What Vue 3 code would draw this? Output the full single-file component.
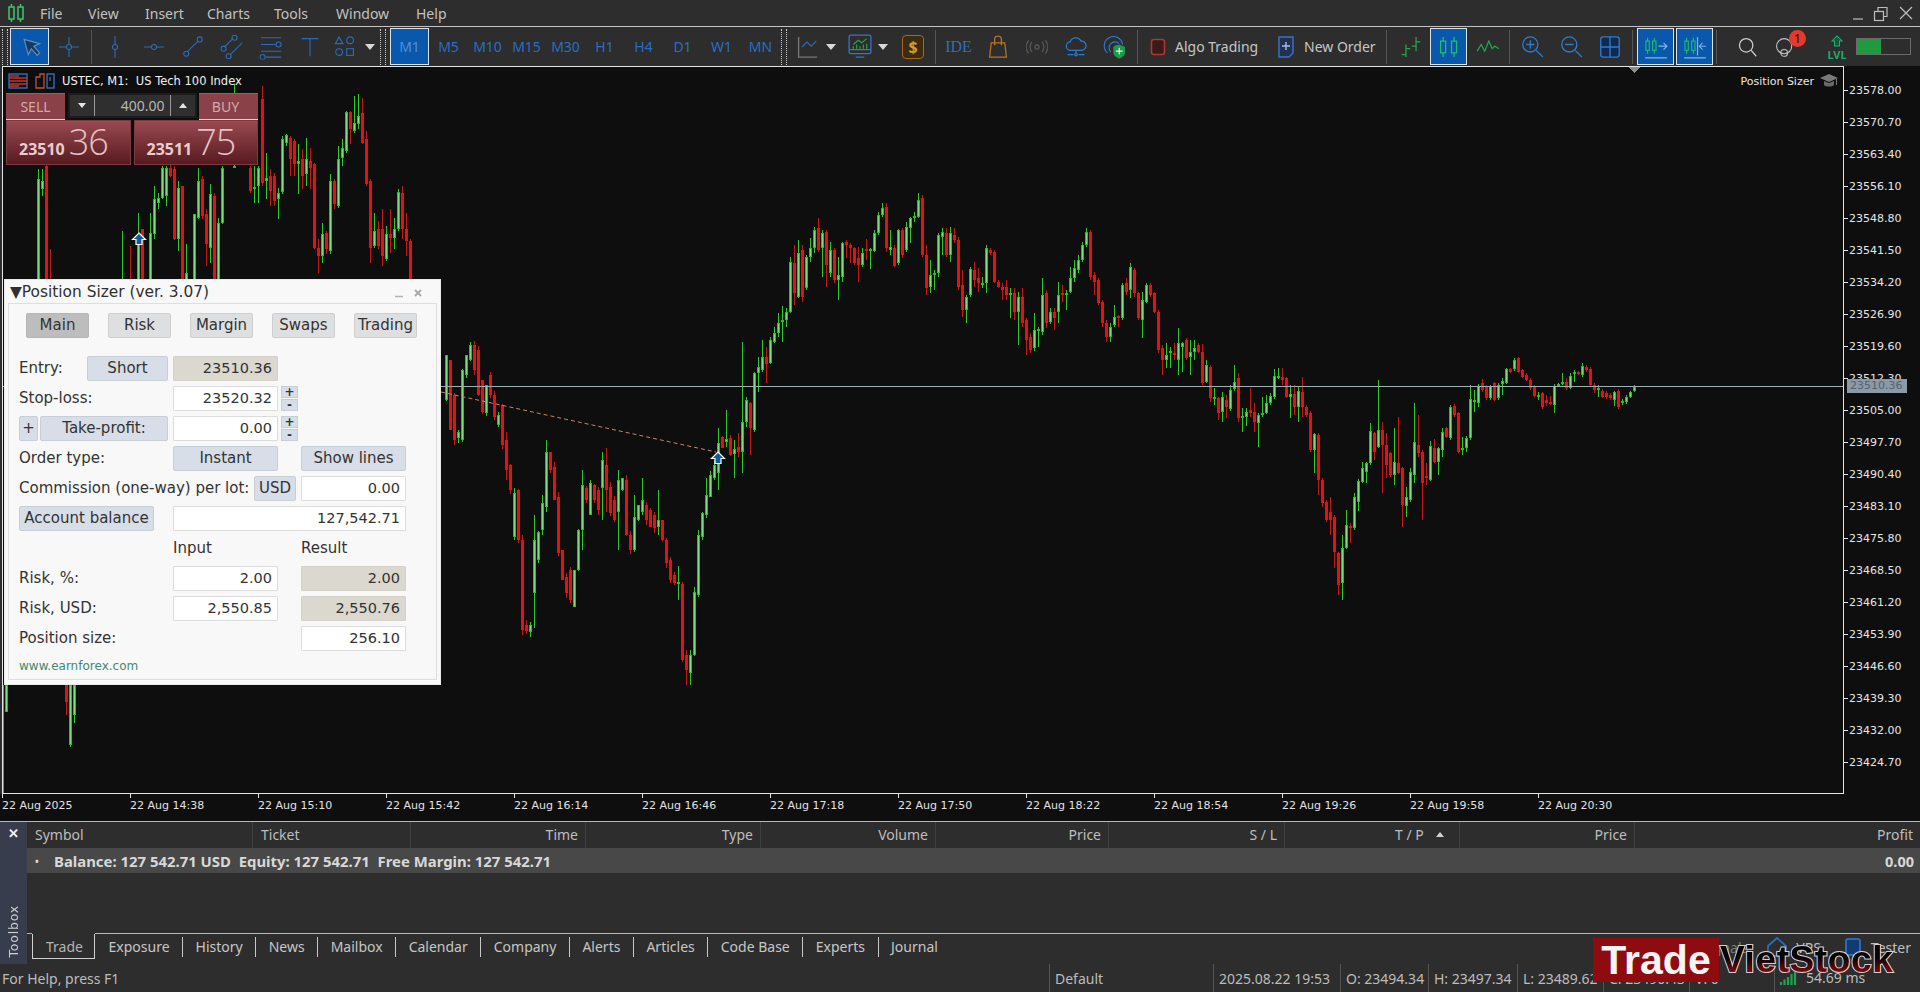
<script setup>
const menus = ['File', 'View', 'Insert', 'Charts', 'Tools', 'Window', 'Help']
const periods = ['M5', 'M10', 'M15', 'M30', 'H1', 'H4', 'D1', 'W1', 'MN']
const prices = ['23578.00','23570.70','23563.40','23556.10','23548.80','23541.50','23534.20','23526.90','23519.60','23512.30','23505.00','23497.70','23490.40','23483.10','23475.80','23468.50','23461.20','23453.90','23446.60','23439.30','23432.00','23424.70']
const times = ['22 Aug 2025','22 Aug 14:38','22 Aug 15:10','22 Aug 15:42','22 Aug 16:14','22 Aug 16:46','22 Aug 17:18','22 Aug 17:50','22 Aug 18:22','22 Aug 18:54','22 Aug 19:26','22 Aug 19:58','22 Aug 20:30']
const cols = [['Symbol', 'l'], ['Ticket', 'l'], ['Time', 'r'], ['Type', 'r'], ['Volume', 'r'], ['Price', 'r'], ['S / L', 'r'], ['T / P', 's'], ['Price', 'r'], ['Profit', 'r']]
const tabs = ['Exposure', 'History', 'News', 'Mailbox', 'Calendar', 'Company', 'Alerts', 'Articles', 'Code Base', 'Experts', 'Journal']
const status = [['Default', 164], ['2025.08.22 19:53', 127], ['O: 23494.34', 88], ['H: 23497.34', 89], ['L: 23489.62', 86], ['C: 23490.43', 86], ['V: 0', 85]]

let seed = 20250822
function rnd() {
  seed = (seed * 1664525 + 1013904223) % 4294967296
  return seed / 4294967296
}
const bars = []
function seg(x0, base, scale, text) {
  text.trim().split(/\s+/).forEach((tok, i) => {
    const m = tok.match(/^([gr])(\d+)-(\d+)(?::(\d+)-(\d+))?$/)
    if (!m) return
    const top = base + m[2] * scale
    const bot = base + m[3] * scale
    const wt = m[4] ? base + m[4] * scale : top - Math.floor(rnd() * 6)
    const wb = m[5] ? base + m[5] * scale : bot + Math.floor(rnd() * 6)
    bars.push({ x: x0 + i * 4, c: m[1], top, bot, wt, wb })
  })
}
seg(2, 685, 1, 'g0-108:0-108 g0-27:0-27')
seg(38, 66, 1 / 3, 'g340-700:310-700 g345-370:310-390 r300-700 r640-700:550-700')
seg(66, 685, 1, 'r0-17:0-30 g0-60:0-62 g0-30:0-38')
seg(122, 66, 1 / 3, 'g640-700:495-700 _ r640-700:540-700 _ g520-700:440-700 r490-700 _ g500-700:440-700 g400-505:360-520 g395-410:380-430 g305-395:300-400 g305-390:300-420 r305-330 r310-520 g365-520:345-555 r360-700 g620-700:535-700 _ g445-700 g345-455:305-460 r340-450:330-460 r445-535:430-600 g385-545:355-590 r390-700 g470-700 g305-470:300-475')
seg(234, 66, 1 / 3, 'g300-306:55-306')
seg(250, 66, 1 / 3, 'r305-375:300-380 g362-368:300-410 g305-360:300-410 r100-350:60-360 g335-345:260-400 r330-375:310-420 r330-405:320-420 g380-400:365-460 g220-378:210-385 g208-232:205-240 r215-280:210-330 r225-295:220-330 g285-295:235-385 r280-330:250-370 g280-325:215-360 r285-305:245-370 r295-545:290-550 r545-570:520-620 g505-570:470-590 r500-550:495-565 g345-555:325-565 r345-415:340-430 g280-420:240-425 g245-275:220-300 g138-255:135-260 r138-190:135-235 g170-195:90-200 g150-175:85-190 r140-230:95-235 r220-355:195-360 r345-545:340-590 g495-540:440-545 r490-540:465-550 r490-570:430-600 g505-580:480-585 r505-515:430-560 g490-515:455-550 g378-490:370-495 r380-490:360-520 r490-525:440-570 r525-700')
seg(446, 0, 1, 'g355-400 r360-430 r395-440 g432-438 g370-440 g355-375 g345-360 r345-370 r350-395 r380-412 g385-413 r375-395 r395-417 g415-425 r405-445 r440-470:432-480 r465-490 g493-537:488-540 r490-540 r540-630 r625-631:620-634 g625-632 g540-593:515-628 g532-560 g503-530:495-535 g452-507:440-512 r452-470 r467-500 r497-553 r550-580 r577-593 r570-600 g570-607 g530-570 g485-530:470-550 r488-500 g483-515 r485-500 r490-510 g460-488:452-520 r465-490:448-512 r487-513 r500-520 g480-512:470-550 g478-490 r480-535 r535-550 g517-550:495-552 g505-520 g500-512:478-515 r505-520 r510-527 r515-528 g520-527:490-535 r520-540 r540-563 r560-580 r575-583 g582-584:566-600 r584-660 r655-670:650-685 g655-673:650-685 g592-655 g535-595 g513-537 g495-515:478-518 g475-497 g465-478 g443-473:428-490')
seg(718, 180, 1 / 3, 'g790-880 r770-805 g778-785:690-800 r775-825 g808-822:780-895 r800-815:760-830 g725-815:485-880 g660-725:650-740 r670-745:665-825 g580-750:575-755 g562-578:530-635 g532-570:480-575 r530-552:500-610 g480-548:470-552 g460-485:440-490 g428-460:400-470 g420-426:378-485 g395-420:385-440 g245-395:230-400 r250-340:195-375 g220-350:180-355 r210-350:195-365 g230-325:225-330 g205-230:175-245 g150-205:140-220 r145-210:115-215 g160-205:150-290 r155-255:150-320 g210-280:185-290 r210-300:205-310 g285-300:230-360 g188-290:185-305 r185-195:180-235 r195-205:190-250 r205-250:200-255 r235-255:200-305 g220-255:205-260 r208-214:178-240 g208-214:205-268 g160-212:150-215 g105-160:95-165 g85-105:70-110 r80-205:70-215 g200-210:150-225 r205-258:195-260 g150-250:148-255 r150-225:145-235 g140-210:125-215 g115-145:110-190 g108-114:95-125 g60-110:40-115 r55-225:45-230 r225-325:195-345 g285-320:240-340 g280-286:270-330 g165-280:160-290 g155-170:145-225 r160-225:145-230 g160-225:140-245 r165-180:145-190 r180-320:170-330 r315-390:270-410 g350-390:345-430 g268-345:262-350 r270-300:245-320 r295-310:265-335 g308-314:290-325 g205-310:195-340 r210-220:205-225 r215-305:210-310 r305-320:300-325 r320-330:310-360 r320-345:300-360 g340-346:325-415 r340-395:325-420 g350-395:335-495 r350-430:325-440 r420-480:415-525 r470-510:460-520 g450-505:400-512 g448-453:440-500 g345-455:295-465 r340-430:330-445 g395-425:385-432 r395-415:385-450 g345-395:305-430 r338-343:315-365 g338-343:330-390 g295-335:260-340 g265-295:240-305 g240-270:225-280 g195-240:185-245 g155-195:145-200 r155-290:150-300 r285-305:275-345 r300-370:295-375 r365-430:360-440 r430-470:420-485 g440-470:430-485 g410-435:375-440 r408-414:405-440 g315-415:310-420 r310-335:295-345 g260-330:250-355 r270-340:265-350 r340-415:335-420 g360-420:335-475 g315-365:310-370 r315-345:310-350 r340-395:335-400 r395-510:390-520 r505-540:495-585 g525-540:490-565 g513-519:500-565 r518-525:490-540 g490-540:445-585')
seg(1182, 320, 1 / 3, 'g70-80:65-155 r60-115:55-120 g97-110:60-165 g83-95:60-120 r75-95:70-100 r95-190:72-195 g135-185:120-190 r140-235:135-245 g232-238:205-255 r235-280:230-300 g232-275:215-305 r240-260:225-295 g210-268:195-272 g187-208:135-212 r175-295:160-305 g288-294:265-335 g277-290:265-318 r270-280:205-290 r275-305:250-335 g285-308:280-380 g278-284:230-290 g250-278:225-282 g227-250:220-255 g168-232:148-238 g168-174:145-178 r170-180:145-195 r175-230:170-235 g222-232:195-295 r222-260:195-285 g212-260:200-305 r215-262:170-290 r262-285:255-290 r278-390:272-395 g343-390:340-460 r345-480:340-525 r480-550:475-560 r545-600:540-605 r575-600:530-645 r590-695:585-745 r700-795:695-825 g685-790:645-840 g615-683:570-688 r618-624:610-670 g530-625:520-630 g483-545:478-572 g445-485:425-490 g430-455:425-490 g333-430:310-435 r340-395:335-420 g330-380:180-385 r330-375:305-520 r375-435:340-475 r400-465:395-470 g425-465:325-495 r430-458:290-462 r445-555:440-620 g530-558:500-590 g455-540:445-545 g367-465:250-490 r375-400:285-410 r395-490:390-600 r468-474:430-495 g378-480:362-482 r385-425:358-430 g385-425:380-465 g335-390:325-410 r325-350:320-355 g262-355:255-360 r258-285:252-290 r280-395:275-400 g383-389:350-405 g355-385:348-395 g238-355:195-360 g240-246:210-275 g197-248:192-262 r190-210:178-215 r200-235:195-240 g198-235:195-240 r190-240:185-244 g195-235:190-240 g183-192:175-225 g147-188:143-192 r148-155:144-160 g120-148:115-152 r113-155:110-160 r150-170:146-174 r165-180:160-184 r180-205:175-210 r200-228:196-232 g226-232:215-240 r220-260:215-268 r240-250:225-258 r245-252:228-256 g197-255:192-280 g193-199:188-202 g185-190:160-195 r185-205:175-210 g167-205:160-208 g157-163:150-185 r156-162:152-166 g138-165:130-172 r140-150:135-155 r148-195:142-200 r195-210:190-218 g204-208:195-232 r212-230:208-234 r218-232:214-236 r225-235:220-240 g217-240:212-258 r213-262:208-268 g243-249:238-256 g230-245:226-252 g215-230:212-235 g200-213:196-216')

function rectPath(x, y, w, h) {
  if (h <= 0) return ''
  return `M${x} ${y}h${w}v${h}h${-w}z`
}
const paths = { gw: '', rw: '', gb: '', rb: '', gc: '' }
bars.forEach((b) => {
  const t = Math.round(b.top), h = Math.max(2, Math.round(b.bot) - t)
  const wt = Math.round(Math.min(b.wt, b.top)), wb = Math.round(Math.max(b.wb, b.bot))
  if (b.c === 'g') {
    paths.gw += rectPath(b.x, wt, 1, wb - wt)
    paths.gb += rectPath(b.x - 1, t, 3, h)
    paths.gc += rectPath(b.x, t + 1, 1, h - 2)
  } else {
    paths.rw += rectPath(b.x, wt, 1, wb - wt)
    paths.rb += rectPath(b.x - 1, t, 3, h)
  }
})
</script>

<template>
  <div class="app">
    <header class="menubar">
      <svg class="logo" width="20" height="20" viewBox="0 0 20 20"><g fill="none" stroke="#3fbf6a" stroke-width="1.6"><rect x="3" y="4" width="5" height="12"/><rect x="12" y="4" width="5" height="12"/><path d="M5.5 1v3M5.5 16v3M14.500 1v3M14.500 16v3"/></g></svg>
      <nav class="menus"><span v-for="m in menus" :key="m" class="menu">{{ m }}</span></nav>
      <div class="winctl">
        <svg width="72" height="20" viewBox="0 0 72 20"><g fill="none" stroke="#bdbdbd" stroke-width="1.2"><path d="M2 16h10"/><rect x="23.500" y="8.500" width="9" height="9"/><path d="M27 8V4.500h9v9h-3.500"/><path d="M49 4l12 12M61 4L49 16"/></g></svg>
      </div>
    </header>

    <div class="toolbar">
      <i class="grip"></i>
      <span class="tb on w39"><svg width="30" height="30" viewBox="0 0 30 30"><path d="M8 6l5 18 3.500-7 7 8 3-3-7-8 7-3z" fill="#17385f" stroke="#5f8fc6" stroke-width="1.4"/></svg></span>
      <span class="tb w39"><svg width="26" height="26" viewBox="0 0 26 26"><g fill="none" stroke="#2d6bb8" stroke-width="1.3"><path d="M13 1v9M13 16v9M1 13h9M16 13h9"/><circle cx="13" cy="13" r="3"/></g></svg></span>
      <i class="sep"></i>
      <span class="tb w39"><svg width="26" height="30" viewBox="0 0 26 30"><g fill="none" stroke="#2d6bb8" stroke-width="1.3"><path d="M13 2v10M13 18v10"/><circle cx="13" cy="15" r="3"/></g></svg></span>
      <span class="tb w39"><svg width="28" height="26" viewBox="0 0 28 26"><g fill="none" stroke="#2d6bb8" stroke-width="1.3"><path d="M2 13h9M17 13h9"/><circle cx="14" cy="13" r="3"/></g></svg></span>
      <span class="tb w39"><svg width="28" height="30" viewBox="0 0 28 30"><g fill="none" stroke="#2d6bb8" stroke-width="1.3"><path d="M8 20L20 8"/><circle cx="6" cy="23" r="3"/><circle cx="22" cy="6" r="3"/></g></svg></span>
      <span class="tb w39"><svg width="28" height="30" viewBox="0 0 28 30"><g fill="none" stroke="#2d6bb8" stroke-width="1.3"><path d="M5 15L15 5M12 24L26 10"/><circle cx="17" cy="4" r="3"/><circle cx="4" cy="17" r="3"/><circle cx="10" cy="26" r="3"/></g></svg></span>
      <span class="tb w39"><svg width="28" height="30" viewBox="0 0 28 30"><g fill="none" stroke="#2d6bb8" stroke-width="1.3"><path d="M2 4h24M2 12h18M2 20h24M8 27h18"/><circle cx="23" cy="12" r="3"/><circle cx="4" cy="27" r="3"/></g></svg></span>
      <span class="tb w39"><svg width="24" height="26" viewBox="0 0 24 26"><path d="M2 3h20M12 3v21" fill="none" stroke="#2d6bb8" stroke-width="1.3"/></svg></span>
      <span class="tb w32"><svg width="26" height="30" viewBox="0 0 26 30"><g fill="none" stroke="#2d6bb8" stroke-width="1.3"><path d="M6 3l4.500 8h-9z"/><circle cx="19" cy="7" r="4"/><circle cx="6" cy="21" r="4"/><rect x="15" y="17" width="8" height="8"/></g></svg></span>
      <span class="tb w18"><i class="caret"></i></span>
      <i class="grip g2"></i>
      <span class="tb on w39 per">M1</span>
      <span v-for="p in periods" :key="p" class="tb w39 per">{{ p }}</span>
      <i class="grip g3"></i>
      <span class="tb w30"><svg width="30" height="32" viewBox="0 0 30 32"><path d="M5 4v24h22" fill="none" stroke="#777" stroke-width="1.6"/><path d="M9 16l6-6 5 5 6-6" fill="none" stroke="#2d6bb8" stroke-width="1.4"/></svg></span>
      <span class="tb w18"><i class="caret"></i></span>
      <span class="tb w34 ml3"><svg width="30" height="32" viewBox="0 0 30 32"><rect x="2" y="2" width="26" height="22" rx="2" fill="none" stroke="#3a73c8" stroke-width="1.5"/><path d="M2 19h26M10 28h10" stroke="#3a73c8" stroke-width="1.5"/><path d="M7 13l6-5 4 3 6-5" fill="none" stroke="#2aa34a" stroke-width="1.3"/><path d="M7 18v-3M11 18v-5M15 18v-3M19 18v-5M23 18v-6" stroke="#2aa34a" stroke-width="1.4"/></svg></span>
      <span class="tb w18 mlm"><i class="caret"></i></span>
      <span class="tb w38 ml2"><span class="dollar">$</span></span>
      <i class="sep"></i>
      <span class="tb w39 ide">IDE</span>
      <span class="tb w39"><svg width="22" height="28" viewBox="0 0 22 28"><g fill="none" stroke="#b5771f" stroke-width="1.5"><path d="M3 9h16l2 17H1z"/><path d="M7 12V5a4 4 0 018 0v7"/></g></svg></span>
      <span class="tb w39"><svg width="26" height="20" viewBox="0 0 26 20"><g fill="none" stroke="#5a5a5a" stroke-width="1.4"><circle cx="13" cy="10" r="2.500"/><path d="M7 4a9 9 0 000 12M19 4a9 9 0 010 12M3 2a13 13 0 000 16M23 2a13 13 0 010 16"/></g></svg></span>
      <span class="tb w39"><svg width="26" height="26" viewBox="0 0 26 26"><g fill="none" stroke="#2d7bd0" stroke-width="1.4"><path d="M7 17a5 5 0 01-1-10 7 7 0 0113-1 5.500 5.500 0 011 11z"/><path d="M13 17v4M3 22h7M16 22h7"/><circle cx="13" cy="22" r="1.500"/></g></svg></span>
      <span class="tb w39"><svg width="28" height="30" viewBox="0 0 28 30"><g fill="none" stroke="#2d7bd0" stroke-width="1.4"><path d="M5 22a11 11 0 1118-10M9 21a7 7 0 1110-10M13 16a3 3 0 015-2"/></g><path d="M19 12l7 3v6c0 4-3 6-7 8-4-2-7-4-7-8v-6z" fill="#1c9c4a"/><path d="M19 16v8M15 20h8" stroke="#d7f5e2" stroke-width="1.4"/></svg></span>
      <i class="sep s2"></i>
      <span class="tlabel algo"><svg width="16" height="20" viewBox="0 0 16 20"><rect x="1.500" y="2.500" width="13" height="15" rx="2.500" fill="#3a1a1a" stroke="#b0362e" stroke-width="1.6"/></svg><b>Algo Trading</b></span>
      <span class="tlabel order"><svg width="18" height="24" viewBox="0 0 18 24"><path d="M2 2h14v16l-4 4H2z" fill="#22324e" stroke="#3a73c8" stroke-width="1.4"/><path d="M9 7v8M5 11h8" stroke="#9fc0ee" stroke-width="1.4"/></svg><b>New Order</b></span>
      <i class="sep s3"></i>
      <span class="tb w39"><svg width="28" height="30" viewBox="0 0 28 30"><path d="M8 12v15M3 24h5M8 17h5M20 3v17M15 14h5M20 9h5" fill="none" stroke="#2aa34a" stroke-width="1.5"/></svg></span>
      <span class="tb on w37"><svg width="26" height="30" viewBox="0 0 26 30"><g fill="none" stroke="#1fc06a" stroke-width="1.5"><rect x="3" y="8" width="6" height="14"/><rect x="16" y="8" width="6" height="14"/><path d="M6 3v5M6 22v5M19 3v5M19 22v5"/></g></svg></span>
      <span class="tb w39 ml1"><svg width="28" height="20" viewBox="0 0 28 20"><path d="M1 15l5-8 4 8 5-12 4 9 3-3 5 3" fill="none" stroke="#2aa34a" stroke-width="1.5"/></svg></span>
      <i class="sep s5"></i>
      <span class="tb w39"><svg width="28" height="30" viewBox="0 0 28 30"><g fill="none" stroke="#2d7bd0" stroke-width="1.6"><circle cx="12" cy="12" r="9"/><path d="M12 7v10M7 12h10M19 19l8 8"/></g></svg></span>
      <span class="tb w39"><svg width="28" height="30" viewBox="0 0 28 30"><g fill="none" stroke="#2d7bd0" stroke-width="1.6"><circle cx="12" cy="12" r="9"/><path d="M7 12h10M19 19l8 8"/></g></svg></span>
      <span class="tb w39"><svg width="26" height="28" viewBox="0 0 26 28"><g fill="#10294d" stroke="#2d7bd0" stroke-width="1.6"><rect x="2" y="2" width="22" height="24" rx="3"/><path d="M13 2v24M2 14h22"/></g></svg></span>
      <i class="sep"></i>
      <span class="tb on w37 ml1"><svg width="30" height="30" viewBox="0 0 30 30"><g fill="none" stroke="#1fc06a" stroke-width="1.3"><rect x="3" y="8" width="4" height="11"/><rect x="11" y="8" width="4" height="11"/><path d="M5 4v4M5 19v4M13 4v4M13 19v4"/></g><path d="M18 14h9M24 10l4 4-4 4" fill="none" stroke="#7fb4ea" stroke-width="1.4"/><path d="M2 28h26" stroke="#7fb4ea" stroke-width="1.5"/></svg></span>
      <span class="tb on w37 ml2"><svg width="30" height="30" viewBox="0 0 30 30"><g fill="none" stroke="#1fc06a" stroke-width="1.3"><rect x="3" y="8" width="4" height="11"/><rect x="11" y="8" width="4" height="11"/><path d="M5 4v4M5 19v4M13 4v4M13 19v4"/></g><path d="M18 3v22" stroke="#7fb4ea" stroke-width="1.4"/><path d="M28 14h-7M24 10l-4 4 4 4" fill="none" stroke="#7fb4ea" stroke-width="1.2"/><path d="M2 28h26" stroke="#7fb4ea" stroke-width="1.5"/></svg></span>
      <i class="sep s4"></i>
      <span class="tb w26 ml18"><svg width="24" height="26" viewBox="0 0 24 26"><g fill="none" stroke="#cfcfcf" stroke-width="1.5"><circle cx="11" cy="11" r="8"/><path d="M17 17l6 7"/></g></svg></span>
      <span class="tb w38 notif ml10">
        <svg width="22" height="26" viewBox="0 0 22 26"><g fill="none" stroke="#c4c4c4" stroke-width="1.3"><circle cx="10" cy="12" r="9"/><circle cx="10" cy="20" r="4"/></g></svg>
        <em class="badge">1</em>
      </span>
      <span class="tb w38 lvl ml12">
        <svg width="16" height="14" viewBox="0 0 16 14"><path d="M8 1l6 6h-3v6H5V7H2z" fill="#0f5a3a" stroke="#22b06a" stroke-width="1.2"/></svg>
        <span>LVL</span>
      </span>
      <span class="meter"><i></i></span>
    </div>

    <section class="chart">
      <div class="plot">
        <svg class="candles" width="1840" height="726" viewBox="3 67 1840 726" shape-rendering="crispEdges">
          <path :d="paths.gw" fill="#2fc92f"/>
          <path :d="paths.rw" fill="#c21a1a"/>
          <path :d="paths.gb" fill="#1fc41f"/>
          <path :d="paths.gc" fill="#7ddc7d"/>
          <path :d="paths.rb" fill="#df1313"/>
          <path d="M3 386.500H1843" stroke="#9fb0b4" stroke-width="1" fill="none"/>
          <path d="M441 392L716 452" stroke="#c9836b" stroke-dasharray="4 3" fill="none" stroke-width="1" shape-rendering="auto"/>
          <g shape-rendering="auto" stroke="#fff" stroke-width="1.200" fill="#0f5d9a">
            <path d="M139 233l6.500 6.500h-3.500v5h-6v-5h-3.500z"/>
            <path d="M718 452l6.500 6.500h-3.500v5h-6v-5h-3.500z"/>
          </g>
          <path d="M1628 67h12l-6 6z" fill="#8d8d8d"/>
        </svg>
        <div class="sym">
          <svg width="20" height="16" viewBox="0 0 20 16"><g fill="none" stroke-width="1.300"><rect x="1" y="1" width="18" height="14" stroke="#3a73c8"/><path d="M1 5h18M1 8h18M1 11h18" stroke="#c0392b"/><path d="M1 3h10M1 13h10" stroke="#c0392b"/></g></svg>
          <svg class="sym2" width="20" height="16" viewBox="0 0 20 16"><g fill="none" stroke-width="1.300"><path d="M1 4h4V1h4v14H1z" stroke="#c2542b"/><rect x="12" y="1" width="7" height="14" stroke="#3a73c8"/><path d="M15 4v4" stroke="#3a73c8"/></g></svg>
          <span>USTEC, M1:&nbsp; US Tech 100 Index</span>
        </div>
        <div class="sizer-tag">
          <span>Position Sizer</span>
          <svg width="20" height="18" viewBox="0 0 20 18"><path d="M10 2l9 4-9 4-9-4z" fill="#7a7a7a"/><path d="M5 9v4c2 2 8 2 10 0V9l-5 2z" fill="#6a6a6a"/><path d="M17.500 7v6" stroke="#7a7a7a"/></svg>
        </div>
      </div>
      <aside class="paxis">
        <span v-for="p in prices" :key="p" class="plabel">{{ p }}</span>
        <span class="curprice">23510.36</span>
      </aside>
      <div class="taxis">
        <span v-for="t in times" :key="t" class="tlab">{{ t }}</span>
      </div>

      <div class="oneclick">
        <div class="oc-top">
          <button class="oc-side">SELL</button>
          <div class="oc-vol">
            <span class="oc-arrow"><i class="tri-d"></i></span>
            <span class="oc-val">400.00</span>
            <span class="oc-arrow"><i class="tri-u"></i></span>
          </div>
          <button class="oc-side buy">BUY</button>
        </div>
        <div class="oc-prices">
          <div class="oc-price"><b>23510</b><span>36</span></div>
          <div class="oc-price"><b>23511</b><span>75</span></div>
        </div>
      </div>

      <div class="ps">
        <div class="ps-title">
          <span class="ps-name">▼Position Sizer (ver. 3.07)</span>
          <span class="ps-ctl">
            <svg width="34" height="12" viewBox="0 0 34 12"><path d="M0 9.500h8" stroke="#b4b4b4" stroke-width="1.500"/><path d="M20 3l6 6M26 3l-6 6" stroke="#a8a8a8" stroke-width="1.800"/></svg>
          </span>
        </div>
        <div class="ps-body">
          <div class="ps-tabs">
            <span class="ps-tab on">Main</span>
            <span class="ps-tab">Risk</span>
            <span class="ps-tab">Margin</span>
            <span class="ps-tab">Swaps</span>
            <span class="ps-tab">Trading</span>
          </div>
          <div class="row">
            <label class="w68">Entry:</label>
            <span class="btn w81">Short</span>
            <span class="fld ro w105 ml5">23510.36</span>
          </div>
          <div class="row">
            <label class="w154">Stop-loss:</label>
            <span class="fld w105">23520.32</span>
            <span class="spin"><i>+</i><i>-</i></span>
          </div>
          <div class="row">
            <span class="btn w19">+</span>
            <span class="btn w128 ml2">Take-profit:</span>
            <span class="fld w105 ml5">0.00</span>
            <span class="spin"><i>+</i><i>-</i></span>
          </div>
          <div class="row">
            <label class="w154">Order type:</label>
            <span class="btn w105">Instant</span>
            <span class="btn w105 ml23">Show lines</span>
          </div>
          <div class="row">
            <label class="w235">Commission (one-way) per lot:</label>
            <span class="btn w42">USD</span>
            <span class="fld w105 ml5">0.00</span>
          </div>
          <div class="row">
            <span class="btn w135">Account balance</span>
            <span class="fld w233 ml19">127,542.71</span>
          </div>
          <div class="row">
            <span class="w154"></span>
            <label class="w105">Input</label>
            <label class="w105 ml23">Result</label>
          </div>
          <div class="row">
            <label class="w154">Risk, %:</label>
            <span class="fld w105">2.00</span>
            <span class="fld ro w105 ml23">2.00</span>
          </div>
          <div class="row">
            <label class="w154">Risk, USD:</label>
            <span class="fld w105">2,550.85</span>
            <span class="fld ro w105 ml23">2,550.76</span>
          </div>
          <div class="row">
            <label class="w282">Position size:</label>
            <span class="fld w105">256.10</span>
          </div>
          <div class="url">www.earnforex.com</div>
        </div>
      </div>
    </section>

    <section class="toolbox">
      <aside class="strip">
        <span class="closex">✕</span>
        <span class="tbtext">Toolbox</span>
      </aside>
      <div class="tmain">
        <div class="thead">
          <span v-for="(c, i) in cols" :key="i" :class="['th', c[1]]">{{ c[0] }}<i v-if="c[1] === 's'" class="sorti"></i></span>
        </div>
        <div class="trow">
          <span class="bullet">•</span>
          <span class="bal">Balance: 127 542.71 USD&nbsp; Equity: 127 542.71&nbsp; Free Margin: 127 542.71</span>
          <span class="profit">0.00</span>
        </div>
        <div class="tempty"></div>
        <div class="tabs">
          <span class="tab active">Trade</span>
          <span v-for="t in tabs" :key="t" class="tab">{{ t }}</span>
          <span class="tabr">
            <span class="dim">Signals</span>
            <svg width="22" height="22" viewBox="0 0 22 22"><path d="M11 2l9 8v10H2V10z" fill="none" stroke="#2d6bb8" stroke-width="1.800"/></svg>
            <span>VPS</span>
            <svg class="chip" width="20" height="22" viewBox="0 0 20 22"><rect x="3" y="3" width="14" height="16" rx="2" fill="#123b73" stroke="#2d7bd0" stroke-width="1.600"/></svg>
            <span>Tester</span>
          </span>
        </div>
      </div>
    </section>

    <footer class="status">
      <span class="st help">For Help, press F1</span>
      <span v-for="s in status" :key="s[0]" class="st" :style="{ width: s[1] + 'px' }">{{ s[0] }}</span>
      <span class="st last">
        <svg width="18" height="16" viewBox="0 0 18 16"><path d="M1 15v-3M4.500 15V9.500M8 15V7M11.500 15V4M15 15V1" stroke="#1fa34f" stroke-width="2.200"/></svg>
        <span>54.69 ms</span>
      </span>
    </footer>

    <div class="wm">
      <span class="wm-a">Trade</span>
      <span class="wm-b" data-t="VietStock">VietStock</span>
    </div>
  </div>
</template>

<style scoped>
.app { position: relative; width: 1920px; height: 992px; overflow: hidden; display: flex; flex-direction: column; background: #2d2d2d; color: #c8c8c8; font-family: "Noto Sans", sans-serif; font-size: 14px; }
.menubar { height: 26px; display: flex; align-items: center; border-bottom: 1px solid #c4c4c4; box-sizing: content-box; }
.logo { margin-left: 6px; }
.menus { display: flex; margin-left: 14px; gap: 0; }
.menu { margin-right: 22px; color: #c2c2c2; white-space: nowrap; }
.menu:nth-child(1) { width: 26px; }
.menu:nth-child(2) { width: 35px; }
.menu:nth-child(3) { width: 40px; }
.menu:nth-child(4) { width: 45px; }
.menu:nth-child(5) { width: 40px; }
.menu:nth-child(6) { width: 58px; }
.winctl { margin-left: auto; margin-right: -3px; display: flex; align-items: center; }

.toolbar { height: 39px; display: flex; align-items: center; background: #2d2d2d; }
.grip { width: 6px; height: 36px; margin-left: 2px; margin-right: 2px; border-left: 1px dotted #cfcfcf; border-right: 1px dotted #cfcfcf; box-sizing: border-box; flex: none; }
.grip.g2 { margin-left: 1px; margin-right: 4px; }
.grip.g3 { margin-left: 1px; margin-right: 5px; }
.sep { width: 1px; height: 34px; background: #555; flex: none; margin: 0 3px; }
.sep.s2 { margin: 0 2px 0 3px; }
.sep.s3 { margin: 0 4px 0 1px; }
.sep.s4 { margin: 0 0 0 3px; }
.sep.s5 { margin: 0 2px; }
.tb { height: 37px; display: flex; align-items: center; justify-content: center; flex: none; box-sizing: border-box; position: relative; }
.tb > svg { transform: scale(.84); }
.tb.on { background: #0a58ab; border: 1px solid #d7e3ef; }
.w39 { width: 39px; } .w37 { width: 37px; } .w38 { width: 38px; } .w34 { width: 34px; } .w32 { width: 32px; } .w30 { width: 30px; } .w26 { width: 26px; } .w18 { width: 18px; }
.ml1 { margin-left: 1px; } .ml2 { margin-left: 2px; } .ml3 { margin-left: 3px; } .ml10 { margin-left: 7px; } .ml12 { margin-left: 13px; } .ml18 { margin-left: 17px; } .mlm { margin-left: -3px; }
.per { color: #2b6cc4; font-size: 14px; }
.tb.on.per { color: #4f8fda; }
.caret { width: 0; height: 0; border-left: 5px solid transparent; border-right: 5px solid transparent; border-top: 6px solid #d8d8d8; }
.dollar { width: 22px; height: 24px; border: 1.500px solid #a5691c; background: #3d2b10; border-radius: 4px; color: #d99a2b; font-weight: 700; font-size: 16px; line-height: 22px; text-align: center; box-sizing: border-box; }
.ide { color: #2f6db8; font-family: "Liberation Serif", serif; font-size: 16px; font-weight: 400; }
.tlabel { display: flex; align-items: center; flex: none; height: 37px; }
.tlabel b { font-weight: 400; color: #c6c6c6; white-space: nowrap; font-size: 14px; }
.algo { width: 137px; padding-left: 10px; box-sizing: border-box; }
.algo b { margin-left: 9px; }
.order { width: 108px; box-sizing: border-box; }
.order b { margin-left: 9px; }
.notif { justify-content: flex-start; padding-left: 7px; }
.badge { position: absolute; left: 22px; top: 2px; width: 17px; height: 17px; border-radius: 50%; background: #e23b2e; color: #3a0c08; font-style: normal; font-size: 13px; line-height: 17px; text-align: center; }
.lvl { flex-direction: column; color: #1fa86a; font-size: 11px; line-height: 11px; font-weight: 700; }
.lvl span { margin-top: 1px; }
.meter { width: 55px; height: 17px; box-sizing: border-box; border: 1px solid #6a6a6a; display: block; flex: none; }
.meter i { display: block; width: 24px; height: 100%; background: #1f9a3f; }

.chart { position: relative; height: 755px; display: grid; grid-template-columns: 1844px 76px; grid-template-rows: 728px 27px; background: #0e0e0e; }
.plot { position: relative; margin-left: 2px; border: 1px solid #e4e4e4; background: #0e0e0e; box-shadow: -2px 0 0 #2d2d2d; }
.candles { position: absolute; left: 0; top: 0; display: block; }
.sym { position: absolute; left: 5px; top: 6px; display: flex; align-items: center; color: #f0f0f0; font-family: "DejaVu Sans", sans-serif; font-size: 11.500px; }
.sym2 { margin-left: 7px; margin-right: 7px; }
.sizer-tag { position: absolute; right: 4px; top: 5px; display: flex; align-items: center; gap: 5px; color: #e8e8e8; font-family: "DejaVu Sans", sans-serif; font-size: 11px; }
.paxis { position: relative; display: flex; flex-direction: column; padding-top: 9px; font-family: "DejaVu Sans", sans-serif; font-size: 11px; color: #e6e6e6; }
.plabel { position: relative; height: 32px; line-height: 32px; padding-left: 5px; }
.plabel::before { content: ""; position: absolute; left: 0; top: 15px; width: 4px; height: 1px; background: #e4e4e4; }
.curprice { position: absolute; left: 3px; top: 313px; width: 60px; height: 14px; line-height: 14px; background: #8c99a6; color: #56626e; padding-left: 3px; box-sizing: border-box; }
.taxis { grid-column: 1 / 3; display: flex; padding-left: 2px; font-family: "DejaVu Sans", sans-serif; font-size: 11px; color: #e2e2e2; }
.tlab { position: relative; width: 128px; padding-top: 4px; height: 20px; line-height: 16px; white-space: nowrap; flex: none; }
.tlab::before { content: ""; position: absolute; left: 0; top: 0; width: 1px; height: 4px; background: #e4e4e4; }

.oneclick { position: absolute; left: 6px; top: 27px; width: 252px; height: 138px; display: flex; flex-direction: column; }
.oc-top { display: flex; height: 27px; justify-content: space-between; }
.oc-side { width: 59px; height: 27px; padding: 0; border: none; border-bottom: 1px solid #e8cfcf; background: #8a4147; color: #d3a8ab; font-family: "Noto Sans", sans-serif; font-size: 14px; box-shadow: inset 0 1px 0 #a2595f; }
.oc-side.buy { padding-right: 6px; }
.oc-vol { width: 129px; height: 25px; margin-top: 0; display: flex; background: #2f2f2f; border: 2px solid #1c1c1c; box-sizing: border-box; color: #b6b6b6; font-size: 14px; }
.oc-arrow { width: 24px; display: flex; align-items: center; justify-content: center; flex: none; }
.oc-val { flex: 1; text-align: right; padding-right: 5px; line-height: 21px; border-left: 1px solid #9a9a9a; border-right: 1px solid #9a9a9a; }
.tri-d { width: 0; height: 0; border-left: 4px solid transparent; border-right: 4px solid transparent; border-top: 5px solid #e2e2e2; }
.tri-u { width: 0; height: 0; border-left: 4px solid transparent; border-right: 4px solid transparent; border-bottom: 5px solid #e2e2e2; }
.oc-prices { display: flex; justify-content: space-between; height: 45px; margin-top: 0; }
.oc-price { width: 124.500px; height: 45px; background: linear-gradient(#9a4a51, #571a20); box-sizing: border-box; border: 1px solid #7a3a40; display: flex; align-items: baseline; padding-left: 12px; color: #e6c9cb; }
.oc-price b { font-size: 16px; font-weight: 700; color: #e8cdcf; }
.oc-price span { font-size: 36px; line-height: 41px; font-weight: 300; margin-left: 4px; letter-spacing: -1px; font-family: "Open Sans", sans-serif; color: #e4c2c4; }

.ps { position: absolute; left: 4px; top: 213px; width: 437px; height: 406px; box-sizing: border-box; background: #f8f8f8; border: 1px solid #e9e9e9; font-family: "DejaVu Sans", sans-serif; font-size: 15px; color: #333; }
.ps-title { height: 23px; display: flex; align-items: center; justify-content: space-between; padding: 0 11px 0 5px; }
.ps-name { font-size: 15.400px; color: #303030; white-space: nowrap; }
.ps-ctl { display: flex; padding-top: 2px; }
.ps-body { margin: 0 3px; border: 1px solid #dfdfdf; height: 377px; box-sizing: border-box; padding-left: 10px; padding-top: 9px; }
.ps-tabs { display: flex; gap: 19px; margin-left: 7px; margin-bottom: 18px; }
.ps-tab { width: 63px; height: 25px; line-height: 23px; box-sizing: border-box; text-align: center; background: #dedfe0; border: 1px solid #cfcfcf; border-radius: 2px; white-space: nowrap; }
.ps-tab.on { background: #bdbdbd; border-color: #b5b5b5; }
.row { display: flex; height: 25px; margin-bottom: 5px; align-items: center; }
.row label { white-space: nowrap; flex: none; color: #333; margin-bottom: 2px; }
.row > span { flex: none; }
.btn { height: 25px; line-height: 23px; box-sizing: border-box; text-align: center; background: #d7dee7; border: 1px solid #c8ced6; border-radius: 2px; white-space: nowrap; }
.fld { height: 25px; line-height: 23px; box-sizing: border-box; text-align: right; background: #fff; border: 1px solid #dcdcdc; padding-right: 5px; border-radius: 1px; font-size: 14.500px; }
.fld.ro { background: #dad8cf; border-color: #d4d2c8; }
.w68 { width: 68px; } .w81 { width: 81px; } .w105 { width: 105px; } .w154 { width: 154px; } .w19 { width: 19px; } .w128 { width: 128px; } .w235 { width: 235px; } .w42 { width: 42px; } .w135 { width: 135px; } .w233 { width: 233px; } .w282 { width: 282px; }
.ml5 { margin-left: 5px; } .ml23 { margin-left: 23px; } .ml19 { margin-left: 19px; }
.spin { display: flex; flex-direction: column; gap: 1px; margin-left: 3px; width: 17px; height: 25px; }
.spin i { height: 12px; line-height: 10px; text-align: center; font-style: normal; font-weight: 700; background: #d7dee7; border: 1px solid #c8ced6; box-sizing: border-box; font-size: 12px; }
.url { color: #3f8a72; font-size: 12px; line-height: 14px; margin-top: 8px; }

.toolbox { height: 143px; display: flex; border-top: 1px solid #b8b8b8; box-sizing: border-box; }
.strip { width: 27px; flex: none; background: #383d4e; display: flex; flex-direction: column; align-items: center; justify-content: space-between; padding-bottom: 7px; box-sizing: border-box; }
.closex { font-size: 13px; font-weight: 700; color: #f0f0f0; line-height: 22px; }
.tbtext { writing-mode: vertical-rl; transform: rotate(180deg); font-family: "DejaVu Sans", sans-serif; font-size: 12.500px; letter-spacing: .8px; color: #cfcfcf; }
.tmain { flex: 1; display: flex; flex-direction: column; min-width: 0; }
.thead { height: 26px; display: grid; grid-template-columns: 226px 158px 175px 175px 175px 173px 176px 175px 175px 1fr; }
.th { box-sizing: border-box; border-right: 1px solid #3f3f3f; line-height: 26px; padding: 0 7px; color: #bdbdbd; white-space: nowrap; }
.th.l { text-align: left; padding-left: 8px; }
.th.r { text-align: right; }
.th.s { padding-left: 110px; }
.th:last-child { border-right: none; }
.sorti { display: inline-block; margin-left: 12px; margin-bottom: 3px; width: 0; height: 0; border-left: 4px solid transparent; border-right: 4px solid transparent; border-bottom: 5px solid #d4d4d4; }
.trow { height: 25px; background: #484848; display: flex; align-items: center; font-weight: 700; color: #d8d8d8; }
.bullet { width: 27px; padding-left: 8px; box-sizing: border-box; font-size: 10px; }
.bal { white-space: nowrap; font-size: 14.900px; }
.profit { margin-left: auto; padding-right: 6px; font-size: 14.500px; }
.tempty { height: 60px; border-bottom: 1px solid #b8b8b8; }
.tabs { height: 30px; display: flex; align-items: center; padding-bottom: 4px; box-sizing: border-box; }
.tab { position: relative; padding: 0 12.500px; height: 20px; line-height: 20px; border-right: 1px solid #c8c8c8; white-space: nowrap; flex: none; color: #c6c6c6; box-sizing: content-box; }
.tab:nth-last-child(2) { border-right: none; }
.tab.active { margin-left: 5px; width: 63px; height: 25px; margin-top: -1px; padding: 0 0 0 13px; box-sizing: border-box; border: 1px solid #d0d0d0; border-top: none; background: #2d2d2d; line-height: 25px; margin-right: 1px; box-shadow: 0 -1px 0 #2d2d2d; color: #b4b4b4; }
.tabr { margin-left: auto; padding-right: 9px; display: flex; align-items: center; gap: 0; color: #bdbdbd; }
.tabr .dim { color: #777; margin-right: 18px; }
.tabr span { margin-left: 8px; }
.chip { margin-left: 22px; }
.status { height: 28px; display: flex; align-items: center; }
.st { height: 28px; line-height: 30px; box-sizing: border-box; border-left: 1px solid #555; padding-left: 5px; flex: none; white-space: nowrap; color: #bcbcbc; }
.help { width: 1049px; border-left: none; padding-left: 2px; }
.last { flex: 1; display: flex; align-items: center; gap: 8px; padding-left: 5px; }

.wm { position: absolute; left: 1593px; top: 938px; display: flex; align-items: center; font-family: "Liberation Sans", sans-serif; font-weight: 700; font-size: 41px; height: 44px; }
.wm-a { width: 126px; height: 44px; line-height: 44px; background: #8e0c10; color: #f4f4f4; text-align: center; }
.wm-b { position: relative; margin-left: 1px; font-size: 37px; letter-spacing: 0.6px; line-height: 44px; color: #d8cccc; -webkit-text-stroke: 2px #d8cccc; }
.wm-b::after { content: attr(data-t); position: absolute; left: 0; top: 0; -webkit-text-stroke: 0; color: transparent; background: linear-gradient(#050505 45%, #8a0a10 80%); -webkit-background-clip: text; background-clip: text; }
</style>

<style>
html, body { margin: 0; background: #2d2d2d; overflow: hidden; }
</style>
